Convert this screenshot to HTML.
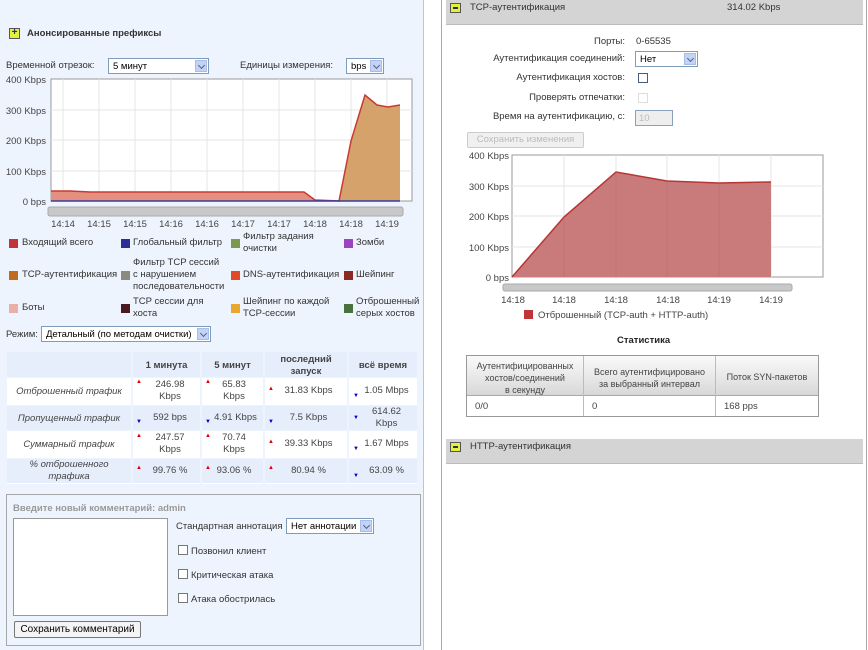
<!DOCTYPE html>
<html><head><meta charset="utf-8"><style>
*{margin:0;padding:0;box-sizing:border-box}
body{width:868px;height:650px;background:#fff;font-family:"Liberation Sans",Arial,sans-serif;font-size:9.5px;color:#333;position:relative;overflow:hidden}
.a{position:absolute;white-space:nowrap}
.sel{position:absolute;border:1px solid #7f9db9;background:#fff;height:16px;font-size:9.5px;padding:2px 4px;color:#000;overflow:hidden}
.sel i{position:absolute;right:1px;top:1px;width:12px;height:12px;background:#c3d3f5;border:1px solid #a8bde8}
.sel i:after{content:"";position:absolute;left:3px;top:2px;width:4px;height:4px;border-right:1.5px solid #4d6185;border-bottom:1.5px solid #4d6185;transform:rotate(45deg)}
.lg{position:absolute;width:9px;height:9px}
.lt{position:absolute;font-size:9.5px;line-height:12px;color:#333}
.cb{position:absolute;width:10px;height:10px;border:1px solid #777;background:#fff}
.up{color:#d00;font-size:6px;position:absolute}
.dn{color:#00c;font-size:6px;position:absolute}
</style></head><body>
<div class="a" style="left:0;top:0;width:424px;height:650px;background:#eef4fd;border-right:1px solid #b8c6d8"></div>
<div class="a" style="left:9px;top:28px;width:11px;height:11px;background:#e0f03c;border:1px solid #556;font-size:10px;line-height:8px;text-align:center;font-weight:bold">+</div>
<div class="a" style="left:27px;top:28px;font-weight:bold;font-size:9.5px;color:#333">Анонсированные префиксы</div>
<div class="a" style="left:6px;top:60px">Временной отрезок:</div>
<div class="sel" style="left:108px;top:58px;width:101px">5 минут<i></i></div>
<div class="a" style="left:240px;top:60px">Единицы измерения:</div>
<div class="sel" style="left:346px;top:58px;width:38px">bps<i></i></div>
<svg class="a" style="left:0;top:70px" width="424" height="160">
<g font-size="9.5" fill="#444" text-anchor="end" font-family="Liberation Sans">
<text x="46" y="13">400 Kbps</text><text x="46" y="44">300 Kbps</text><text x="46" y="74">200 Kbps</text><text x="46" y="105">100 Kbps</text><text x="46" y="135">0 bps</text></g>
<rect x="51" y="9" width="361" height="122" fill="#fff" stroke="#999"/>
<g stroke="#e4e4e4">
<line x1="51" y1="40" x2="412" y2="40"/><line x1="51" y1="70" x2="412" y2="70"/><line x1="51" y1="101" x2="412" y2="101"/>
<line x1="63" y1="9" x2="63" y2="131"/><line x1="99" y1="9" x2="99" y2="131"/><line x1="135" y1="9" x2="135" y2="131"/><line x1="171" y1="9" x2="171" y2="131"/><line x1="207" y1="9" x2="207" y2="131"/><line x1="243" y1="9" x2="243" y2="131"/><line x1="279" y1="9" x2="279" y2="131"/><line x1="315" y1="9" x2="315" y2="131"/><line x1="351" y1="9" x2="351" y2="131"/><line x1="387" y1="9" x2="387" y2="131"/></g>
<polygon points="51,121 70,121 90,122 304,122 315,130 340,131 51,131" fill="#e5907f"/>
<polyline points="51,121 70,121 90,122 304,122 315,130 340,131" fill="none" stroke="#c83a32" stroke-width="1.5"/>
<polygon points="339,131 351,71 365,25 377,35 388,37 400,35 400,131" fill="#d4a26a"/>
<polyline points="339,131 351,71 365,25 377,35 388,37 400,35" fill="none" stroke="#c83a32" stroke-width="1.5"/>
<line x1="51" y1="131" x2="400" y2="131" stroke="#3a3aa0" stroke-width="1.5"/>
<rect x="48" y="137" width="355" height="9" rx="2" fill="#c8c8c8" stroke="#aaa"/>
<g font-size="9.5" fill="#444" text-anchor="middle" font-family="Liberation Sans">
<text x="63" y="157">14:14</text><text x="99" y="157">14:15</text><text x="135" y="157">14:15</text><text x="171" y="157">14:16</text><text x="207" y="157">14:16</text><text x="243" y="157">14:17</text><text x="279" y="157">14:17</text><text x="315" y="157">14:18</text><text x="351" y="157">14:18</text><text x="387" y="157">14:19</text></g>
</svg>
<div class="lg" style="left:9px;top:239px;background:#c0353a"></div><div class="lt" style="left:22px;top:237px">Входящий всего</div>
<div class="lg" style="left:121px;top:239px;background:#2c2e98"></div><div class="lt" style="left:133px;top:237px">Глобальный фильтр</div>
<div class="lg" style="left:231px;top:239px;background:#7b9a50"></div><div class="lt" style="left:243px;top:231px">Фильтр задания<br>очистки</div>
<div class="lg" style="left:344px;top:239px;background:#9b44c0"></div><div class="lt" style="left:356px;top:237px">Зомби</div>
<div class="lg" style="left:9px;top:271px;background:#c06a1e"></div><div class="lt" style="left:22px;top:269px">TCP-аутентификация</div>
<div class="lg" style="left:121px;top:271px;background:#8a8a80"></div><div class="lt" style="left:133px;top:257px">Фильтр TCP сессий<br>с нарушением<br>последовательности</div>
<div class="lg" style="left:231px;top:271px;background:#e04a2a"></div><div class="lt" style="left:243px;top:269px">DNS-аутентификация</div>
<div class="lg" style="left:344px;top:271px;background:#8a2a22"></div><div class="lt" style="left:356px;top:269px">Шейпинг</div>
<div class="lg" style="left:9px;top:304px;background:#e9b0a8"></div><div class="lt" style="left:22px;top:302px">Боты</div>
<div class="lg" style="left:121px;top:304px;background:#4a1a20"></div><div class="lt" style="left:133px;top:296px">TCP сессии для<br>хоста</div>
<div class="lg" style="left:231px;top:304px;background:#e8a830"></div><div class="lt" style="left:243px;top:296px">Шейпинг по каждой<br>TCP-сессии</div>
<div class="lg" style="left:344px;top:304px;background:#4a7040"></div><div class="lt" style="left:356px;top:296px">Отброшенный<br>серых хостов</div>
<div class="a" style="left:6px;top:329px">Режим:</div>
<div class="sel" style="left:41px;top:326px;width:170px">Детальный (по методам очистки)<i></i></div>
<div class="a" style="left:7px;top:352px;width:410px;height:132px;background:#fff"></div>
<div class="a" style="left:7px;top:352px;width:410px;height:25px;background:#e6eefb"></div>
<div class="a" style="left:7px;top:406px;width:410px;height:24px;background:#e6eefb"></div>
<div class="a" style="left:7px;top:459px;width:410px;height:24px;background:#e6eefb"></div>
<div class="a" style="left:131px;top:352px;width:2px;height:132px;background:#eef4fd"></div>
<div class="a" style="left:200px;top:352px;width:2px;height:132px;background:#eef4fd"></div>
<div class="a" style="left:263px;top:352px;width:2px;height:132px;background:#eef4fd"></div>
<div class="a" style="left:347px;top:352px;width:2px;height:132px;background:#eef4fd"></div>
<div class="a" style="left:7px;top:377px;width:410px;height:1px;background:#eef4fd"></div>
<div class="a" style="left:7px;top:405px;width:410px;height:1px;background:#eef4fd"></div>
<div class="a" style="left:7px;top:430px;width:410px;height:1px;background:#eef4fd"></div>
<div class="a" style="left:7px;top:458px;width:410px;height:1px;background:#eef4fd"></div>
<div style="font-size:9.5px;color:#444">
<div class="a" style="left:133px;top:360px;width:67px;text-align:center;font-weight:bold">1 минута</div>
<div class="a" style="left:202px;top:360px;width:61px;text-align:center;font-weight:bold">5 минут</div>
<div class="a" style="left:265px;top:354px;width:82px;text-align:center;font-weight:bold;line-height:12px">последний<br>запуск</div>
<div class="a" style="left:349px;top:360px;width:68px;text-align:center;font-weight:bold">всё время</div>
<div class="a" style="left:7px;top:386px;width:124px;text-align:center;font-style:italic">Отброшенный трафик</div>
<div class="a" style="left:7px;top:413px;width:124px;text-align:center;font-style:italic">Пропущенный трафик</div>
<div class="a" style="left:7px;top:439px;width:124px;text-align:center;font-style:italic">Суммарный трафик</div>
<div class="a" style="left:7px;top:459px;width:124px;text-align:center;font-style:italic;line-height:12px">% отброшенного<br>трафика</div>
<div class="a" style="left:140px;top:379px;width:60px;text-align:center;line-height:12px">246.98<br>Kbps</div>
<div class="a" style="left:205px;top:379px;width:58px;text-align:center;line-height:12px">65.83<br>Kbps</div>
<div class="a" style="left:270px;top:385px;width:77px;text-align:center">31.83 Kbps</div>
<div class="a" style="left:356px;top:385px;width:61px;text-align:center">1.05 Mbps</div>
<div class="a" style="left:140px;top:412px;width:60px;text-align:center">592 bps</div>
<div class="a" style="left:208px;top:412px;width:55px;text-align:center">4.91 Kbps</div>
<div class="a" style="left:270px;top:412px;width:77px;text-align:center">7.5 Kbps</div>
<div class="a" style="left:356px;top:406px;width:61px;text-align:center;line-height:12px">614.62<br>Kbps</div>
<div class="a" style="left:140px;top:432px;width:60px;text-align:center;line-height:12px">247.57<br>Kbps</div>
<div class="a" style="left:205px;top:432px;width:58px;text-align:center;line-height:12px">70.74<br>Kbps</div>
<div class="a" style="left:270px;top:438px;width:77px;text-align:center">39.33 Kbps</div>
<div class="a" style="left:356px;top:438px;width:61px;text-align:center">1.67 Mbps</div>
<div class="a" style="left:140px;top:465px;width:60px;text-align:center">99.76 %</div>
<div class="a" style="left:205px;top:465px;width:58px;text-align:center">93.06 %</div>
<div class="a" style="left:270px;top:465px;width:77px;text-align:center">80.94 %</div>
<div class="a" style="left:356px;top:465px;width:61px;text-align:center">63.09 %</div>
</div>
<span class="up a" style="left:136px;top:379px">▲</span><span class="up a" style="left:205px;top:379px">▲</span><span class="up a" style="left:268px;top:386px">▲</span><span class="dn a" style="left:353px;top:393px">▼</span>
<span class="dn a" style="left:136px;top:419px">▼</span><span class="dn a" style="left:205px;top:419px">▼</span><span class="dn a" style="left:268px;top:419px">▼</span><span class="dn a" style="left:353px;top:415px">▼</span>
<span class="up a" style="left:136px;top:433px">▲</span><span class="up a" style="left:205px;top:433px">▲</span><span class="up a" style="left:268px;top:439px">▲</span><span class="dn a" style="left:353px;top:446px">▼</span>
<span class="up a" style="left:136px;top:465px">▲</span><span class="up a" style="left:205px;top:465px">▲</span><span class="up a" style="left:268px;top:465px">▲</span><span class="dn a" style="left:353px;top:473px">▼</span>
<div class="a" style="left:6px;top:494px;width:415px;height:152px;border:1px solid #a8a8a8;background:#eef4fd"></div>
<div class="a" style="left:13px;top:503px;font-weight:bold;color:#999;font-size:9.5px">Введите новый комментарий: admin</div>
<div class="a" style="left:13px;top:518px;width:155px;height:98px;border:1px solid #999;background:#fff"></div>
<div class="a" style="left:14px;top:621px;width:127px;height:17px;border:1px solid #777;border-radius:2px;background:#f4f4f4;font-size:10px;text-align:center;line-height:15px;color:#000">Сохранить комментарий</div>
<div class="a" style="left:176px;top:521px">Стандартная аннотация</div>
<div class="sel" style="left:286px;top:518px;width:88px">Нет аннотации<i></i></div>
<div class="cb" style="left:178px;top:545px"></div><div class="a" style="left:191px;top:546px">Позвонил клиент</div>
<div class="cb" style="left:178px;top:569px"></div><div class="a" style="left:191px;top:570px">Критическая атака</div>
<div class="cb" style="left:178px;top:593px"></div><div class="a" style="left:191px;top:594px">Атака обострилась</div>
<div class="a" style="left:441px;top:0;width:426px;height:650px;border-left:1px solid #aaa;border-right:1px solid #aaa;background:#fff"></div>
<div class="a" style="left:446px;top:0;width:417px;height:25px;background:#d4d4d4;border-bottom:1px solid #bbb"></div>
<div class="a" style="left:450px;top:3px;width:11px;height:10px;background:#e0f03c;border:1px solid #555"><div style="position:absolute;left:2px;top:3px;width:5px;height:1.5px;background:#333"></div></div>
<div class="a" style="left:470px;top:2px">TCP-аутентификация</div>
<div class="a" style="left:727px;top:2px">314.02 Kbps</div>
<div class="a" style="left:500px;top:36px;width:125px;text-align:right">Порты:</div>
<div class="a" style="left:636px;top:36px">0-65535</div>
<div class="a" style="left:460px;top:53px;width:165px;text-align:right">Аутентификация соединений:</div>
<div class="sel" style="left:635px;top:51px;width:63px">Нет<i></i></div>
<div class="a" style="left:460px;top:72px;width:165px;text-align:right">Аутентификация хостов:</div>
<div class="cb" style="left:638px;top:73px;border-color:#4a5a7a"></div>
<div class="a" style="left:460px;top:92px;width:165px;text-align:right">Проверять отпечатки:</div>
<div class="cb" style="left:638px;top:93px;border-color:#ddd"></div>
<div class="a" style="left:460px;top:111px;width:165px;text-align:right">Время на аутентификацию, с:</div>
<div class="a" style="left:635px;top:110px;width:38px;height:16px;border:1px solid #8aa0c0;background:#eee;color:#bbb;font-size:9.5px;padding:2px 3px">10</div>
<div class="a" style="left:467px;top:132px;width:117px;height:16px;border:1px solid #ccc;border-radius:2px;background:#f0f0f0;color:#bbb;font-size:9.5px;text-align:center;line-height:14px">Сохранить изменения</div>
<svg class="a" style="left:441px;top:145px" width="426" height="180">
<g font-size="9.5" fill="#444" text-anchor="end" font-family="Liberation Sans">
<text x="68" y="14">400 Kbps</text><text x="68" y="45">300 Kbps</text><text x="68" y="75">200 Kbps</text><text x="68" y="106">100 Kbps</text><text x="68" y="136">0 bps</text></g>
<rect x="71" y="10" width="311" height="122" fill="#fff" stroke="#999"/>
<g stroke="#e4e4e4"><line x1="71" y1="41" x2="382" y2="41"/><line x1="71" y1="71" x2="382" y2="71"/><line x1="71" y1="102" x2="382" y2="102"/>
<line x1="123" y1="10" x2="123" y2="132"/><line x1="175" y1="10" x2="175" y2="132"/><line x1="226" y1="10" x2="226" y2="132"/><line x1="278" y1="10" x2="278" y2="132"/><line x1="330" y1="10" x2="330" y2="132"/></g>
<polygon points="71,132 123,72 175,27 226,36 278,38 330,37 330,132" fill="#c97b7b"/>
<polyline points="71,132 123,72 175,27 226,36 278,38 330,37" fill="none" stroke="#b83535" stroke-width="1.5"/>
<g stroke="#b07070" opacity=".5"><line x1="123" y1="72" x2="123" y2="132"/><line x1="175" y1="27" x2="175" y2="132"/><line x1="226" y1="36" x2="226" y2="132"/><line x1="278" y1="38" x2="278" y2="132"/></g>
<rect x="62" y="139" width="289" height="7" rx="2" fill="#c8c8c8" stroke="#aaa"/>
<g font-size="9.5" fill="#444" text-anchor="middle" font-family="Liberation Sans">
<text x="72" y="158">14:18</text><text x="123" y="158">14:18</text><text x="175" y="158">14:18</text><text x="227" y="158">14:18</text><text x="278" y="158">14:19</text><text x="330" y="158">14:19</text></g>
<rect x="83" y="165" width="9" height="9" fill="#c0353a"/>
<text x="97" y="173" font-size="9.5" fill="#444" font-family="Liberation Sans">Отброшенный (TCP-auth + HTTP-auth)</text>
</svg>
<div class="a" style="left:617px;top:335px;font-weight:bold;color:#222">Статистика</div>
<div class="a" style="left:466px;top:355px;width:353px;height:62px;border:1px solid #999;background:#fff"></div>
<div class="a" style="left:467px;top:356px;width:351px;height:40px;background:linear-gradient(#fafafa,#d8d8d8);border-bottom:1px solid #aaa"></div>
<div class="a" style="left:583px;top:356px;width:1px;height:60px;background:#bbb"></div>
<div class="a" style="left:715px;top:356px;width:1px;height:60px;background:#bbb"></div>
<div class="a" style="left:467px;top:360px;width:116px;text-align:center;font-size:9px;line-height:12px;color:#444">Аутентифицированных<br>хостов/соединений<br>в секунду</div>
<div class="a" style="left:584px;top:366px;width:131px;text-align:center;font-size:9px;line-height:12px;color:#444">Всего аутентифицировано<br>за выбранный интервал</div>
<div class="a" style="left:716px;top:372px;width:102px;text-align:center;font-size:9px;color:#444">Поток SYN-пакетов</div>
<div class="a" style="left:475px;top:401px;color:#444">0/0</div>
<div class="a" style="left:592px;top:401px;color:#444">0</div>
<div class="a" style="left:724px;top:401px;color:#444">168 pps</div>
<div class="a" style="left:446px;top:439px;width:417px;height:25px;background:#d4d4d4;border-bottom:1px solid #bbb"></div>
<div class="a" style="left:450px;top:442px;width:11px;height:10px;background:#e0f03c;border:1px solid #555"><div style="position:absolute;left:2px;top:3px;width:5px;height:1.5px;background:#333"></div></div>
<div class="a" style="left:470px;top:441px">HTTP-аутентификация</div>
</body></html>
